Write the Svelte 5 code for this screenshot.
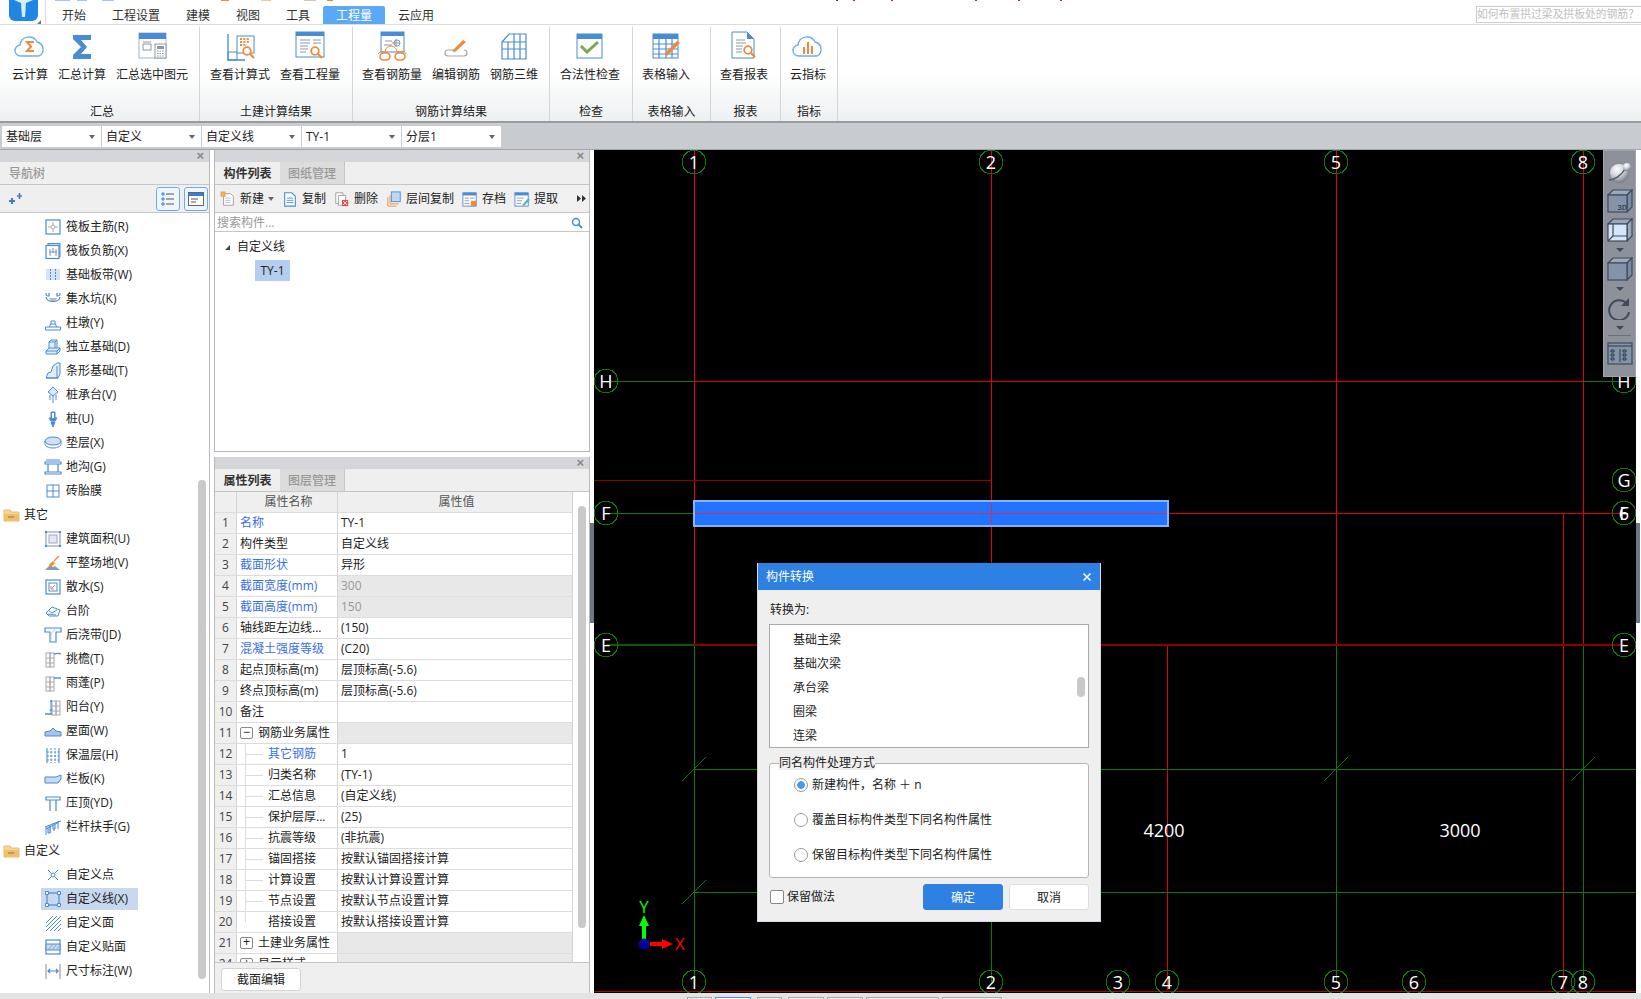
<script>
  const B = '#4a8bd6', O = '#ee8a3a', G = '#a8a8a8';

  const treeIcons = {
    raftMain: `<rect x="2" y="2" width="14" height="14" fill="#fff" stroke="${B}" stroke-width="1.2"/><path d="M9 4v10M4 9h10" stroke="#aaa"/><circle cx="9" cy="9" r="2" fill="#fff" stroke="#aaa"/>`,
    raftNeg: `<rect x="4" y="1.5" width="12" height="13" fill="#cfe0f4" stroke="${B}"/><rect x="2" y="3.5" width="13" height="13" fill="#fff" stroke="${B}" stroke-width="1.2"/><path d="M6 7v7M9 6v5M12 7v7M5 10h8" stroke="#7b93ad"/>`,
    strip: `<rect x="2" y="3" width="14" height="11" fill="#d5e4f5"/><path d="M6.5 3v11M11.5 3v11" stroke="${B}" stroke-dasharray="2 1"/>`,
    pit: `<path d="M2 3c0 3 1 3 3 3V3M16 3c0 3-1 3-3 3V3M2 7c1 6 13 6 14 0" fill="none" stroke="${B}" stroke-width="1.2"/><path d="M5 8h8l-1 3H6z" fill="#bbb"/>`,
    pier: `<path d="M1.5 13h15v3h-15zM5.5 13l1-3h5l1 3M7 10V7h4v3" fill="#fff" stroke="${B}"/>`,
    iso: `<path d="M2 16v-3l3-3h11v3l-3 3zM2 13h11v3M13 13l3-3M5 10V4l2-2h6v8M5 4h6v6M11 4l2-2" fill="#e4eefa" stroke="${B}"/>`,
    stripF: `<path d="M2 16l2-5 3-1 2-6 4-3h3v11l-2 4z" fill="#e4eefa" stroke="${B}"/><path d="M2 16h12M13 4v12" fill="none" stroke="${B}"/>`,
    cap: `<path d="M9 1l5 5-5 4-5-4zM9 10v7M6 9v5M12 9v5" fill="#dce9f8" stroke="${B}"/>`,
    pile: `<path d="M7 2h4v8H7zM5 8h8l-2 3H7zM7 12h4l-2 5z" fill="${B}" stroke="${B}"/><rect x="8" y="3" width="2" height="5" fill="#fff"/>`,
    cushion: `<ellipse cx="9" cy="7" rx="8" ry="4" fill="#cfe0f4" stroke="${B}"/><path d="M1 7v3c0 2 3 4 8 4s8-2 8-4V7" fill="none" stroke="${B}"/>`,
    ditch: `<path d="M2 2h14M1 4h16v2H1zM4 6v8M14 6v8M1 14h16v2H1z" fill="none" stroke="${B}" stroke-width="1.2"/>`,
    brick: `<rect x="3" y="3" width="12" height="12" fill="none" stroke="${B}"/><path d="M9 3v12M3 9h12" stroke="${B}"/>`,
    area: `<rect x="2" y="2" width="14" height="14" fill="none" stroke="#8ea4bd" stroke-width="1.2"/><rect x="5" y="5" width="8" height="8" fill="#e4e8ee" stroke="#9aa9bb"/><path d="M1 1h2v2H1zM15 1h2v2h-2zM1 15h2v2H1zM15 15h2v2h-2z" fill="${B}"/>`,
    level: `<path d="M1 16l5-5 3 2 2-1 5 4z" fill="#8f99a6"/><path d="M6 12l4-4" stroke="${O}" stroke-width="3"/><path d="M10 7l5-5" stroke="${O}" stroke-width="1.4"/>`,
    apron: `<rect x="2" y="2" width="14" height="14" fill="none" stroke="${B}" stroke-width="1.2"/><rect x="5" y="5" width="8" height="8" fill="#fff" stroke="${B}"/><path d="M11 7l-4 4M7 8v3h3" fill="none" stroke="${O}"/>`,
    step: `<path d="M2 11l6-6 8 3-2 6H5z" fill="#fff" stroke="${B}"/><path d="M5 9l3 2 5-3M4 12l8 1" fill="none" stroke="${B}"/>`,
    pour: `<path d="M1 2h16v4h-5v10H6V6H1z" fill="#fff" stroke="${B}" stroke-width="1.2"/><path d="M7 14V8l4-5" fill="none" stroke="#aacbf0"/>`,
    eave: `<rect x="2" y="3" width="4" height="14" fill="none" stroke="${G}"/><rect x="6" y="3" width="4" height="14" fill="none" stroke="${G}"/><path d="M2 8h8M2 13h8" stroke="${G}"/><path d="M10 4c3-1 5-1 7 0" fill="none" stroke="${B}" stroke-width="1.2"/>`,
    canopy: `<rect x="2" y="3" width="4" height="14" fill="none" stroke="${G}"/><rect x="6" y="3" width="4" height="14" fill="none" stroke="${G}"/><path d="M2 8h8M2 13h8" stroke="${G}"/><path d="M10 4h7" stroke="${B}" stroke-width="1.4"/>`,
    balcony: `<rect x="12" y="3" width="4" height="14" fill="none" stroke="${G}"/><rect x="8" y="3" width="4" height="14" fill="none" stroke="${G}"/><path d="M8 8h8M8 13h8" stroke="${G}"/><path d="M6 3h2M1 16h7M6 12h2" stroke="${B}" stroke-width="1.5"/><path d="M7 3v13" stroke="${B}"/>`,
    roof: `<path d="M1 10l5-1 3-3 3 3 5 1v4H1z" fill="#a7c5ea" stroke="${B}"/>`,
    insul: `<path d="M3 2v15M15 2v15" stroke="${B}" stroke-width="1.1"/><path d="M7 2v15M11 2v15M3 6h12M3 10h12M3 14h12" stroke="${B}" stroke-dasharray="2 1.5"/>`,
    parapet: `<path d="M1 7h11l5-2v4l-3 4H1z" fill="#c5daf3" stroke="${B}"/>`,
    coping: `<path d="M2 3h14v3H2zM6 6v11M12 6v11" fill="none" stroke="${B}" stroke-width="1.2"/>`,
    rail: `<path d="M2 17V9M6 15V7M10 13V5M14 11V3M2 11l13-7M1 9l5-2 5-2 6-2" fill="none" stroke="${B}"/><path d="M4 9h2v6H4zM9 6h2v5H9z" fill="#cfe0f4" stroke="${B}"/>`,
    point: `<path d="M4 4l10 10M14 4L4 14" stroke="${B}"/><circle cx="9" cy="9" r="2" fill="#fff" stroke="${B}"/>`,
    line: `<rect x="3" y="3" width="12" height="12" fill="none" stroke="${B}" stroke-width="1.2"/><path d="M1.5 1.5h3v3h-3zM13.5 1.5h3v3h-3zM1.5 13.5h3v3h-3zM13.5 13.5h3v3h-3z" fill="#fff" stroke="${B}"/>`,
    face: `<path d="M2 9l7-7M2 13l11-11M2 17L17 2M6 17L17 6M10 17l7-7M14 17l3-3" stroke="${B}"/>`,
    patch: `<rect x="2" y="2" width="14" height="14" fill="#fff" stroke="${B}" stroke-width="1.2"/><path d="M2 6h14v6H2z" fill="#c5daf3" stroke="${B}"/><path d="M4 12l5-6M8 12l5-6M12 12l4-5" stroke="#8fa8c7"/>`,
    dim: `<path d="M2 2v15M16 2v15" stroke="#8b8b8b"/><path d="M4 9h10M6 7l-2 2 2 2M12 7l2 2-2 2" fill="none" stroke="${B}" stroke-width="1.2"/>`,
  };

  const tree = [
    ['raftMain', '筏板主筋(R)'], ['raftNeg', '筏板负筋(X)'], ['strip', '基础板带(W)'], ['pit', '集水坑(K)'],
    ['pier', '柱墩(Y)'], ['iso', '独立基础(D)'], ['stripF', '条形基础(T)'], ['cap', '桩承台(V)'],
    ['pile', '桩(U)'], ['cushion', '垫层(X)'], ['ditch', '地沟(G)'], ['brick', '砖胎膜'],
    ['folder', '其它'],
    ['area', '建筑面积(U)'], ['level', '平整场地(V)'], ['apron', '散水(S)'], ['step', '台阶'],
    ['pour', '后浇带(JD)'], ['eave', '挑檐(T)'], ['canopy', '雨蓬(P)'], ['balcony', '阳台(Y)'],
    ['roof', '屋面(W)'], ['insul', '保温层(H)'], ['parapet', '栏板(K)'], ['coping', '压顶(YD)'],
    ['rail', '栏杆扶手(G)'],
    ['folder', '自定义'],
    ['point', '自定义点'], ['line', '自定义线(X)'], ['face', '自定义面'], ['patch', '自定义贴面'], ['dim', '尺寸标注(W)'],
  ];

  const head = (x, y, w, h) => `<rect x="${x}" y="${y}" width="${w}" height="${h}" fill="#fff" stroke="${B}"/><rect x="${x}" y="${y}" width="${w}" height="4" fill="${B}"/>`;
  const glass = (x, y) => `<circle cx="${x}" cy="${y}" r="3.8" fill="#fff" stroke="${O}" stroke-width="1.8"/><path d="M${x + 3} ${y + 3}l4 4" stroke="${O}" stroke-width="2.2"/>`;

  const ribbonIcons = {
    cloudSum: `<path d="M7 26a5.5 5.5 0 0 1-1-11 9 9 0 0 1 17-3 7.5 7.5 0 0 1 2 14z" fill="#fff" stroke="#69b0f2" stroke-width="1.4"/><path d="M20 12h-7l4 4.5-4 4.500h7" fill="none" stroke="${O}" stroke-width="2"/>`,
    sigma: `<path d="M7 5h18v5H15l6 7-6 7h10v5H7v-4l8-8-8-8z" fill="${B}"/>`,
    calc: `<rect x="3" y="3" width="27" height="25" fill="#fff" stroke="#9fb4cc"/><rect x="3" y="3" width="27" height="6" fill="${B}"/><rect x="7" y="14" width="8" height="6" fill="none" stroke="#8a97a6"/><path d="M7 12h8" stroke="#8a97a6"/><rect x="19" y="14" width="11" height="14" fill="#fff" stroke="#8a97a6"/><rect x="21" y="16" width="7" height="3" fill="#8a97a6"/><path d="M21 21h7M21 23.500h7M21 26h7" stroke="#8a97a6" stroke-dasharray="1.500 1"/>`,
    formula: `<path d="M4 4v26h17" fill="none" stroke="${B}" stroke-width="1.300"/><rect x="4" y="22" width="9" height="8" fill="none" stroke="${B}"/><rect x="13" y="6" width="17" height="17" fill="#fff" stroke="${B}"/><path d="M16 9h10M16 12h10M16 15h7" stroke="${O}" stroke-width="2" stroke-dasharray="2 1.400"/>${glass(23, 21)}`,
    qty: `${head(2, 2, 28, 25)}<path d="M6 10h10M6 13h10M6 16h8M6 19h8M6 22h6M19 10h8M19 13h8" stroke="#8a97a6"/>${glass(21, 21)}`,
    glasses: `${head(5, 2, 23, 20)}<path d="M9 11h7M8 15h8M20 9v8M16 13h8" stroke="#8a97a6"/><circle cx="21" cy="13" r="3" fill="none" stroke="#8a97a6"/><path d="M2 24a4 4 0 0 1 5-2h2a5 5 0 0 1 12 0h3a4 4 0 0 1 6 2" fill="none" stroke="${O}"/><rect x="4" y="23" width="10" height="7" rx="3.500" fill="#fff" stroke="${O}" stroke-width="1.600"/><rect x="19" y="23" width="10" height="7" rx="3.500" fill="#fff" stroke="${O}" stroke-width="1.600"/>`,
    edit: `<path d="M15 20H8a3 3 0 0 0 0 6h16a3 3 0 0 0 0-6" fill="none" stroke="#a7a7a7" stroke-width="1.200"/><path d="M12 21l11-11 3 2-11 10z" fill="${O}"/>`,
    rebar: `<path d="M4 12l7-8h17v25H4zM4 12h24M4 19h24M10 12v17M16 4v25M22 4v25M4 12v17" fill="none" stroke="${B}" stroke-width="1.200"/>`,
    check: `<rect x="3" y="4" width="25" height="24" fill="#fff" stroke="${B}"/><rect x="3" y="4" width="25" height="5" fill="${B}"/><path d="M7 16l6 6L24 12" fill="none" stroke="#78a853" stroke-width="3"/>`,
    table: `<rect x="3" y="4" width="25" height="24" fill="#fff" stroke="${B}"/><rect x="3" y="4" width="25" height="5" fill="${B}"/><path d="M3 14h25M3 19h25M3 24h25M9 9v19M16 9v19M22 9v19" stroke="${B}" stroke-width="1.200"/><path d="M17 26l13-13-3-2-12 12z" fill="${O}"/>`,
    report: `<path d="M4 2h15l7 7v19H4z" fill="#fff" stroke="${B}"/><path d="M19 2l7 7h-7z" fill="${B}"/><path d="M8 10h9M8 13h10M8 16h7M8 19h6M8 22h6" stroke="#8a97a6"/>${glass(20, 20)}`,
    cloudBar: `<path d="M7 26a5.500 5.500 0 0 1-1-11 9 9 0 0 1 17-3 7.500 7.500 0 0 1 2 14z" fill="#fff" stroke="#69b0f2" stroke-width="1.400"/><path d="M12 24V17M16 24V12M20 24V16" stroke="${O}" stroke-width="2"/>`,
  };

  const groups = [
    { name: '汇总', w: 200, pad: 4, items: [['cloudSum', '云计算', 52], ['sigma', '汇总计算', 52], ['calc', '汇总选中图元', 88]] },
    { name: '土建计算结果', w: 153, pad: 5, items: [['formula', '查看计算式', 70], ['qty', '查看工程量', 70]] },
    { name: '钢筋计算结果', w: 197, pad: 9, items: [['glasses', '查看钢筋量', 60], ['edit', '编辑钢筋', 68], ['rebar', '钢筋三维', 48]] },
    { name: '检查', w: 83, pad: 0, items: [['check', '合法性检查', 80]] },
    { name: '表格输入', w: 78, pad: 0, items: [['table', '表格输入', 66]] },
    { name: '报表', w: 70, pad: 0, items: [['report', '查看报表', 66]] },
    { name: '指标', w: 57, pad: 0, items: [['cloudBar', '云指标', 54]] },
  ];

  const tools = [
    ['新建', `<path d="M4 3h8l3 3v10H4z" fill="#fff" stroke="#999"/><path d="M6 8h6M6 10.500h6M6 13h6" stroke="#bbb"/><rect x="1" y="1" width="5" height="5" fill="#f4b25a"/><path d="M1 1h5v5H1z" fill="none" stroke="#e58a1f" stroke-dasharray="1 1"/>`],
    ['复制', `<path d="M3 2h8l4 4v11H3z" fill="#fff" stroke="${B}" stroke-width="1.200"/><path d="M5.500 8h7M5.500 10.500h7M5.500 13h7" stroke="${B}"/>`],
    ['删除', `<path d="M2 2h8v12H2z" fill="#fff" stroke="#999"/><path d="M5 5h8v11H5z" fill="#fff" stroke="#999"/><rect x="9" y="10" width="7" height="7" fill="#d9534f"/><path d="M10.500 11.500l4 4M14.500 11.500l-4 4" stroke="#fff"/>`],
    ['层间复制', `<path d="M2 7v10h10M4.500 5v9.500h10" fill="none" stroke="${O}"/><rect x="6" y="1" width="10" height="11" fill="#bcd8f7" stroke="${B}"/>`],
    ['存档', `<rect x="1" y="2" width="15" height="15" fill="#fff" stroke="${B}"/><rect x="1" y="2" width="15" height="3" fill="${B}"/><path d="M3 8h5M3 11h5M3 14h5M9 8h5" stroke="#8a97a6"/><rect x="10" y="11" width="6" height="6" fill="${O}"/>`],
    ['提取', `<rect x="1" y="2" width="15" height="15" fill="#fff" stroke="${B}"/><rect x="1" y="2" width="15" height="3" fill="${B}"/><path d="M3 8h8M3 11h6M3 14h5" stroke="#8a97a6"/><path d="M9 16l7-8 2 2-7 7z" fill="#5ab0c8"/>`],
  ];

  const rows = [
    { n: 1, name: '名称', val: 'TY-1', blue: true },
    { n: 2, name: '构件类型', val: '自定义线' },
    { n: 3, name: '截面形状', val: '异形', blue: true },
    { n: 4, name: '截面宽度(mm)', val: '300', blue: true, off: true },
    { n: 5, name: '截面高度(mm)', val: '150', blue: true, off: true },
    { n: 6, name: '轴线距左边线...', val: '(150)' },
    { n: 7, name: '混凝土强度等级', val: '(C20)', blue: true },
    { n: 8, name: '起点顶标高(m)', val: '层顶标高(-5.6)' },
    { n: 9, name: '终点顶标高(m)', val: '层顶标高(-5.6)' },
    { n: 10, name: '备注', val: '' },
    { n: 11, name: '钢筋业务属性', val: '', group: '−' },
    { n: 12, name: '其它钢筋', val: '1', blue: true, sub: true },
    { n: 13, name: '归类名称', val: '(TY-1)', sub: true },
    { n: 14, name: '汇总信息', val: '(自定义线)', sub: true },
    { n: 15, name: '保护层厚...', val: '(25)', sub: true },
    { n: 16, name: '抗震等级', val: '(非抗震)', sub: true },
    { n: 17, name: '锚固搭接', val: '按默认锚固搭接计算', sub: true },
    { n: 18, name: '计算设置', val: '按默认计算设置计算', sub: true },
    { n: 19, name: '节点设置', val: '按默认节点设置计算', sub: true },
    { n: 20, name: '搭接设置', val: '按默认搭接设置计算', sub: true, last: true },
    { n: 21, name: '土建业务属性', val: '', group: '+' },
    { n: 24, name: '显示样式', val: '', group: '+' },
  ];

  // grid lines, page coordinates
  const RED = '#e00000', GREEN = '#0b7a0b', DRED = '#8a0000';
  const lines = [
    [694, 150, 694, 645, '#f00000'], [694, 645, 694, 982, GREEN],
    [991, 150, 991, 645, RED], [991, 645, 991, 982, GREEN],
    [1336, 150, 1336, 645, RED], [1336, 645, 1336, 982, GREEN],
    [1583, 150, 1583, 645, RED], [1583, 645, 1583, 982, GREEN],
    [1167, 645, 1167, 990, RED], [1563, 513, 1563, 990, RED],
    [606, 381, 694, 381, GREEN], [694, 381, 1583, 381, RED], [1583, 381, 1624, 381, GREEN],
    [593, 480, 991, 480, DRED],
    [606, 513, 694, 513, GREEN], [694, 513, 1624, 513, RED],
    [694, 769, 1636, 769, GREEN], [694, 892, 1636, 892, GREEN],
    [593, 991, 1636, 991, '#b00000'],
    [682, 781, 706, 757, GREEN], [1324, 781, 1348, 757, GREEN], [1571, 781, 1595, 757, GREEN],
    [682, 904, 706, 880, GREEN],
  ];

  const bubbles = [
    [694, 162, '1'], [991, 162, '2'], [1336, 162, '5'], [1583, 162, '8'],
    [606, 381, 'H'], [606, 513, 'F'], [606, 645, 'E'],
    [1624, 381, 'H'], [1624, 480, 'G'], [1624, 513, 'F'], [1624, 513, '6'], [1624, 645, 'E'],
    [694, 982, '1'], [991, 982, '2'], [1118, 982, '3'], [1167, 982, '4'], [1336, 982, '5'], [1414, 982, '6'], [1563, 982, '7'], [1583, 982, '8'],
  ];

  const ring = (cx, cy) => Array.from({ length: 12 }, (_, i) => {
    const a = (i / 12) * Math.PI * 2;
    return `${(cx + 12 * Math.cos(a)).toFixed(1)},${(cy + 12 * Math.sin(a)).toFixed(1)}`;
  }).join(' ');

  const specks = [[55, 15, '#a9c6e8'], [77, 10, '#a9c6e8'], [102, 12, '#a9c6e8'], [221, 8, '#ee8a3a'], [261, 10, '#e8c9a8'], [304, 12, '#c9c9c9'], [327, 6, '#ee8a3a'], [836, 2, '#444'], [853, 2, '#a33'], [891, 2, '#a33'], [975, 2, '#a33'], [1018, 2, '#a33'], [1060, 2, '#a33']];

  const convertTo = ['基础主梁', '基础次梁', '承台梁', '圈梁', '连梁'];
  const sameName = ['新建构件，名称 ＋ n', '覆盖目标构件类型下同名构件属性', '保留目标构件类型下同名构件属性'];
</script>

<div class="app">
  <header class="titlebar">
    {#each specks as [x, w, c]}
      <i class="speck" style="left:{x}px;width:{w}px;background:{c}"></i>
    {/each}
    <div class="logo">
      <svg width="29" height="21" viewBox="0 0 29 21"><path d="M0 0h29v15a6 6 0 0 1-6 6H6a6 6 0 0 1-6-6z" fill="#1f86e6"/><path d="M5 0h19l-7 3-1 14h-3L12 3z" fill="#d8eefc"/></svg>
      <i class="logo__corner"></i>
    </div>
    <nav class="menu">
      {#each ['开始', '工程设置', '建模', '视图', '工具', '工程量', '云应用'] as m}
        <span class="menu__item" class:menu__item--on={m === '工程量'}>{m}</span>
      {/each}
    </nav>
    <div class="ask">如何布置拱过梁及拱板处的钢筋？</div>
  </header>

  <section class="ribbon">
    {#each groups as g}
      <div class="group" style="width:{g.w}px">
        <div class="group__btns" style="padding-left:{g.pad}px">
          {#each g.items as it}
            <div class="rbtn" style="width:{it[2]}px">
              <svg width="32" height="32" viewBox="0 0 32 32">{@html ribbonIcons[it[0]]}</svg>
              <span>{it[1]}</span>
            </div>
          {/each}
        </div>
        <div class="group__name">{g.name}</div>
      </div>
    {/each}
  </section>

  <div class="combos">
    {#each ['基础层', '自定义', '自定义线', 'TY-1', '分层1'] as c}
      <div class="combo"><span>{c}</span><i class="caret"></i></div>
    {/each}
  </div>

  <main class="main">
    <aside class="nav">
      <div class="closebar"><span>×</span></div>
      <div class="nav__title">导航树</div>
      <div class="nav__tools">
        <svg class="pins" width="14" height="12" viewBox="0 0 14 12"><path d="M1 8h6M4 5v6" stroke="#3b7fd0" stroke-width="2"/><path d="M9 3h5M11.500 0v6" stroke="#3b7fd0" stroke-width="1.600"/></svg>
        <span class="spacer"></span>
        <button class="navbtn" aria-label="list"><svg width="14" height="14" viewBox="0 0 14 14"><path d="M1 1h2v2H1zM1 6h2v2H1zM1 11h2v2H1z" fill="none" stroke="#2e81e3"/><path d="M5 2h8M5 7h8M5 12h8" stroke="#555"/></svg></button>
        <button class="navbtn" aria-label="detail"><svg width="16" height="14" viewBox="0 0 16 14"><rect x=".5" y=".5" width="15" height="13" fill="#fff" stroke="#666"/><rect x="1" y="1" width="14" height="3" fill="#2e81e3"/><path d="M3 7h7M3 10h5" stroke="#555"/></svg></button>
      </div>
      <div class="nav__body">
        <ul class="tree">
          {#each tree as [icon, label]}
            {#if icon === 'folder'}
              <li class="tree__row tree__row--folder">
                <svg width="17" height="14" viewBox="0 0 17 14"><path d="M1 2h6l1 2h8v9H1z" fill="#f6d79b" stroke="#e5bb6c"/><path d="M1 6h15v7H1z" fill="#efc06a"/><path d="M5 9h6" stroke="#b98a33" stroke-width="1.400"/></svg>
                <span>{label}</span>
              </li>
            {:else}
              <li class="tree__row" class:tree__row--on={label === '自定义线(X)'}>
                <svg width="18" height="18" viewBox="0 0 18 18">{@html treeIcons[icon]}</svg>
                <span>{label}</span>
              </li>
            {/if}
          {/each}
        </ul>
        <div class="vbar"></div>
      </div>
    </aside>

    <div class="mid">
      <section class="list">
        <div class="closebar"><span>×</span></div>
        <div class="tabs"><span class="tab tab--on">构件列表</span><span class="tab">图纸管理</span></div>
        <div class="tools">
          {#each tools as [label, icon], i}
            <span class="tool">
              <svg width="16" height="16" viewBox="0 0 18 18">{@html icon}</svg>{label}
              {#if i === 0}<i class="caret caret--tool"></i>{/if}
            </span>
          {/each}
          <svg class="tools__more" width="9" height="7" viewBox="0 0 9 7"><path d="M0 0l4 3.500L0 7zM5 0l4 3.500L5 7z" fill="#333"/></svg>
        </div>
        <div class="search">
          <span>搜索构件...</span>
          <svg width="12" height="12" viewBox="0 0 12 12"><circle cx="5" cy="5" r="3.500" fill="none" stroke="#3d93c9" stroke-width="1.500"/><path d="M7.500 7.500l3.500 3.500" stroke="#3d93c9" stroke-width="1.800"/></svg>
        </div>
        <div class="list__body">
          <div class="node"><i class="node__arrow"></i>自定义线</div>
          <div class="leaf">TY-1</div>
        </div>
      </section>

      <section class="props">
        <div class="closebar"><span>×</span></div>
        <div class="tabs"><span class="tab tab--on">属性列表</span><span class="tab">图层管理</span></div>
        <div class="props__wrap">
          <div class="grid">
            <div class="grid__row grid__row--head"><div class="c-n"></div><div class="c-name">属性名称</div><div class="c-val">属性值</div></div>
            {#each rows as r}
              <div class="grid__row">
                <div class="c-n">{r.n}</div>
                <div class="c-name" class:blue={r.blue} class:sub={r.sub} class:lastsub={r.last}>
                  {#if r.group}<i class="expander">{r.group}</i>{/if}{r.name}
                </div>
                <div class="c-val" class:off={r.off} class:band={r.group}>{r.val}</div>
              </div>
            {/each}
          </div>
          <div class="props__scroll"><i></i></div>
        </div>
        <div class="props__foot"><button class="editbtn">截面编辑</button></div>
      </section>
    </div>

    <i class="handle handle--left"></i>

    <section class="canvas">
      <svg class="cad" width="1042" height="843" viewBox="594 150 1042 843">
        {#each lines as [x1, y1, x2, y2, c]}
          <line class="crisp" {x1} {y1} {x2} {y2} stroke={c} stroke-width="1"/>
        {/each}
        <line class="crisp" x1="606" y1="645" x2="694" y2="645" stroke="#0a5a0a" stroke-width="2"/>
        <line class="crisp" x1="694" y1="645" x2="1624" y2="645" stroke={DRED} stroke-width="2"/>
        <rect x="694" y="501" width="474" height="25" fill="#2273ff" stroke="#86b2ff" stroke-width="2"/>
        <line class="crisp" x1="695" y1="513" x2="1167" y2="513" stroke="#d8304a"/>
        <line class="crisp" x1="991" y1="502" x2="991" y2="525" stroke="#d8304a"/>
        {#each bubbles as [x, y, t]}
          <polygon class="crisp" points={ring(x, y)} fill="none" stroke="#0b7a0b"/>
          <text x={x} y={y + 6.500} class="axis">{t}</text>
        {/each}
        <text x="1164" y="837" class="dim">4200</text>
        <text x="1460" y="837" class="dim">3000</text>
        <line x1="644" y1="944" x2="644" y2="925" stroke="#00ff00" stroke-width="4"/>
        <path d="M639 926l5-11 5 11z" fill="#00ff00"/>
        <text x="644" y="913" class="ucs ucs--y">Y</text>
        <line x1="650" y1="944" x2="663" y2="944" stroke="#ff0000" stroke-width="4"/>
        <path d="M662 939l11 5-11 5z" fill="#ff0000"/>
        <circle cx="644" cy="944" r="5.500" fill="#00009c"/>
        <text x="680" y="950" class="ucs ucs--x">X</text>
      </svg>

      <div class="viewbar">
        <svg width="26" height="24" viewBox="0 0 26 24"><defs><radialGradient id="sph" cx=".4" cy=".3" r=".7"><stop offset="0" stop-color="#fff"/><stop offset=".5" stop-color="#d3d7dd"/><stop offset="1" stop-color="#7d838e"/></radialGradient></defs><circle cx="12" cy="13" r="9.500" fill="url(#sph)" stroke="#747a85" stroke-width=".6"/><path d="M2 20c5 0 12-4 16-11" fill="none" stroke="#4d5561" stroke-width="1.400"/><circle cx="20" cy="7" r="4" fill="url(#sph)"/></svg>
        <svg width="26" height="24" viewBox="0 0 26 24"><g stroke="#3f4b5c" stroke-width="1.200"><path d="M1 6l5-5h19l-5 5z" fill="#9aa8ba"/><path d="M20 6l5-5v17l-5 5z" fill="#7a8aa0"/><rect x="1" y="6" width="19" height="17" fill="#8394aa"/></g><text x="15" y="21" class="tag3d">3D</text></svg>
        <svg width="26" height="24" viewBox="0 0 26 24"><g stroke="#3f4b5c" stroke-width="1.200"><path d="M1 6l5-5h19l-5 5z" fill="#9aa8ba"/><path d="M20 6l5-5v17l-5 5z" fill="#9aa8ba"/><rect x="1" y="6" width="19" height="17" fill="#d4e6fb"/><path d="M6 6v12h14M6 18l-5 5" fill="none"/></g></svg>
        <i class="vdrop"></i>
        <svg width="26" height="24" viewBox="0 0 26 24"><g stroke="#3f4b5c" stroke-width="1.200"><path d="M1 6l5-5h19l-5 5z" fill="#9aa8ba"/><path d="M20 6l5-5v17l-5 5z" fill="#7a8aa0"/><rect x="1" y="6" width="19" height="17" fill="#8394aa"/></g></svg>
        <i class="vdrop"></i>
        <svg width="26" height="24" viewBox="0 0 26 24"><path d="M20 8a10 10 0 1 0 2 8" fill="none" stroke="#3f4b5c" stroke-width="2"/><path d="M22 2v8h-8z" fill="#3f4b5c"/></svg>
        <i class="vdrop"></i>
        <i class="vsep"></i>
        <svg width="26" height="24" viewBox="0 0 26 24"><rect x="1" y="2" width="24" height="21" fill="#8394aa" stroke="#3f4b5c" stroke-width="1.200"/><path d="M1 5h24M13 8v13M4 9h3v2H4zM4 13h3v2H4zM4 17h3v2H4zM16 9h3v2h-3zM16 13h3v2h-3zM16 17h3v2h-3z" fill="none" stroke="#2e3948"/></svg>
      </div>
    </section>

    <i class="handle handle--right"></i>
  </main>

  <footer class="status">
    {#each [[687, 25], [715, 36], [757, 25], [788, 36], [827, 36], [866, 73], [942, 60]] as [x, w], i}
      <i class="status__tab" class:status__tab--on={i === 1} style="left:{x}px;width:{w}px"></i>
    {/each}
  </footer>

  <div class="dialog">
    <div class="dialog__head"><span>构件转换</span><svg width="10" height="10" viewBox="0 0 10 10"><path d="M1.500 1.500l7 7M8.500 1.500l-7 7" stroke="#fff" stroke-width="1.500"/></svg></div>
    <div class="dialog__body">
      <div class="dialog__label">转换为:</div>
      <div class="picklist">
        {#each convertTo as item}<div class="picklist__item">{item}</div>{/each}
        <i class="picklist__thumb"></i>
      </div>
      <fieldset class="fs">
        <legend>同名构件处理方式</legend>
        {#each sameName as opt, i}
          <div class="radio"><i class="radio__dot" class:radio__dot--on={i === 0}></i>{opt}</div>
        {/each}
      </fieldset>
      <div class="dialog__foot">
        <i class="checkbox"></i><span>保留做法</span>
        <span class="spacer"></span>
        <button class="btn btn--ok">确定</button>
        <button class="btn">取消</button>
      </div>
    </div>
  </div>
</div>

<style>
  :global(body) {
    margin: 0;
    background: #fff;
  }

  * {
    box-sizing: border-box;
  }

  i {
    font-style: normal;
    display: block;
  }

  .app {
    position: relative;
    width: 1641px;
    height: 999px;
    overflow: hidden;
    display: flex;
    flex-direction: column;
    font: 12px/16px "Open Sans", "Noto Sans CJK SC", sans-serif;
    color: #222;
  }

  .spacer {
    flex: 1;
  }

  /* title bar */
  .titlebar {
    height: 25px;
    flex: none;
    display: flex;
    background: #fff;
    border-bottom: 1px solid #dcdcdc;
    position: relative;
  }

  .speck {
    position: absolute;
    top: 0;
    height: 1px;
  }

  .logo {
    width: 46px;
    padding-left: 9px;
    border-right: 1px solid #dcdcdc;
    position: relative;
  }

  .logo svg {
    display: block;
  }

  .logo__corner {
    position: absolute;
    left: 37px;
    top: 20px;
    border-left: 4px solid transparent;
    border-bottom: 4px solid #777;
  }

  .menu {
    display: flex;
    padding: 6px 0 0 3px;
    height: 24px;
    align-items: stretch;
  }

  .menu__item {
    padding: 2px 13px 0;
    line-height: 16px;
    color: #333;
  }

  .menu__item--on {
    background: #5ba8f5;
    color: #fff;
    border-radius: 2px 2px 0 0;
    padding: 2px 13px 0;
    width: 62px;
    text-align: center;
  }

  .ask {
    position: absolute;
    left: 1476px;
    top: 6px;
    width: 170px;
    height: 17px;
    border: 1px solid #ccc;
    color: #c0c0c0;
    white-space: nowrap;
    overflow: hidden;
    font-size: 10.8px;
    line-height: 14px;
  }

  /* ribbon */
  .ribbon {
    height: 98px;
    flex: none;
    display: flex;
    background: linear-gradient(#fff 0, #fff 50%, #edf0f1 100%);
    border-bottom: 2px solid #9b9b9b;
    padding-top: 2px;
  }

  .group {
    display: flex;
    flex-direction: column;
    align-items: center;
    border-right: 1px solid #d3d6d8;
    height: 94px;
  }

  .group__btns {
    display: flex;
    width: 100%;
    padding-top: 3px;
    flex: 1;
  }

  .rbtn {
    display: flex;
    flex-direction: column;
    align-items: center;
    white-space: nowrap;
    gap: 5px;
  }

  .group__name {
    height: 17px;
    line-height: 16px;
  }

  .group:first-child .group__name {
    padding-left: 5px;
  }

  /* combos */
  .combos {
    height: 27px;
    flex: none;
    display: flex;
    gap: 1px;
    padding: 3px 0 0 2px;
    background: #c8cbcf;
    border-bottom: 1px solid #a3a5a8;
  }

  .combo {
    width: 99px;
    height: 21px;
    background: #fff;
    display: flex;
    align-items: center;
    justify-content: space-between;
    padding: 0 6px 0 4px;
  }

  .caret {
    border-left: 3px solid transparent;
    border-right: 3px solid transparent;
    border-top: 4px solid #666;
  }

  /* main */
  .main {
    flex: 1;
    min-height: 0;
    display: flex;
    background: #fff;
    position: relative;
  }

  .handle {
    position: absolute;
    top: 373px;
    width: 4px;
    height: 100px;
    background: #6b7785;
  }

  .handle--left {
    left: 590px;
  }

  .handle--right {
    left: 1636px;
  }

  .nav {
    width: 210px;
    flex: none;
    display: flex;
    flex-direction: column;
    border-right: 1px solid #b9b9b9;
    margin-right: 4px;
  }

  .closebar {
    height: 12px;
    flex: none;
    background: #d5d6da;
    color: #888;
    text-align: right;
    padding-right: 5px;
    font: bold 13px/11px "Liberation Sans", sans-serif;
  }

  .nav__title {
    height: 23px;
    flex: none;
    background: #efefef;
    border-bottom: 1px solid #c6c6c6;
    color: #999;
    padding: 4px 9px 0;
    font-weight: 500;
  }

  .nav__tools {
    height: 28px;
    flex: none;
    background: #efefef;
    border-bottom: 1px solid #c6c6c6;
    display: flex;
    align-items: center;
    gap: 4px;
    padding: 0 1px 0 8px;
  }

  .navbtn {
    width: 24px;
    height: 24px;
    padding: 0;
    display: flex;
    align-items: center;
    justify-content: center;
    background: #eef5fd;
    border: 1px solid #6aaef2;
    border-radius: 3px;
  }

  .nav__body {
    flex: 1;
    min-height: 0;
    position: relative;
    background: #fff;
  }

  .tree {
    list-style: none;
    margin: 0;
    padding: 2px 0 0;
  }

  .tree__row {
    height: 24px;
    display: flex;
    align-items: center;
    gap: 4px;
    margin-left: 42px;
    padding-left: 2px;
    width: 97px;
    white-space: nowrap;
  }

  .tree__row--on {
    background: #c7d8ef;
    height: 22px;
    margin: 1px 0 1px 41px;
    padding-left: 3px;
  }

  .tree__row--folder {
    margin-left: 3px;
    padding-left: 0;
    gap: 4px;
  }

  .vbar {
    position: absolute;
    left: 198px;
    top: 267px;
    width: 8px;
    height: 499px;
    border-radius: 4px;
    background: #c9c9c9;
  }

  /* middle column */
  .mid {
    width: 376px;
    flex: none;
    display: flex;
    flex-direction: column;
    gap: 5px;
  }

  .list {
    height: 302px;
    flex: none;
    display: flex;
    flex-direction: column;
    border: solid #b9b9b9;
    border-width: 0 1px 1px;
  }

  .tabs {
    height: 23px;
    flex: none;
    display: flex;
    background: #efefef;
    border-bottom: 1px solid #c6c6c6;
  }

  .tab {
    width: 65px;
    text-align: center;
    line-height: 23px;
    background: #dcdcdc;
    color: #999;
    border-right: 1px solid #c6c6c6;
    font-weight: 500;
  }

  .tab--on {
    background: #efefef;
    color: #333;
    font-weight: 600;
    border-right: 0;
  }

  .tools {
    height: 28px;
    flex: none;
    display: flex;
    align-items: center;
    background: #f0f0f0;
    border-bottom: 1px solid #c6c6c6;
    padding: 1px 0 0 5px;
    gap: 8px;
    position: relative;
  }

  .tool {
    display: flex;
    align-items: center;
    gap: 4px;
    white-space: nowrap;
  }

  .caret--tool {
    margin-left: 0;
  }

  .tools__more {
    position: absolute;
    right: 3px;
    top: 10px;
  }

  .search {
    height: 19px;
    flex: none;
    background: #fff;
    border-bottom: 1px solid #c6c6c6;
    display: flex;
    align-items: center;
    justify-content: space-between;
    padding: 1px 6px 0 2px;
    color: #999;
  }

  .list__body {
    flex: 1;
    background: #fff;
    padding: 6px 0 0 10px;
  }

  .node {
    display: flex;
    align-items: center;
    height: 18px;
    gap: 7px;
  }

  .node__arrow {
    border-left: 5px solid transparent;
    border-bottom: 5px solid #444;
  }

  .leaf {
    margin: 4px 0 0 30px;
    width: 35px;
    height: 21px;
    line-height: 21px;
    text-align: center;
    background: #b3ceee;
  }

  .props {
    flex: 1;
    min-height: 0;
    display: flex;
    flex-direction: column;
    border: solid #b9b9b9;
    border-width: 0 1px;
    background: #efefef;
  }

  .props__wrap {
    height: 471px;
    flex: none;
    display: flex;
    border-bottom: 1px solid #c6c6c6;
    overflow: hidden;
    background: #fff;
  }

  .grid {
    width: 358px;
    flex: none;
  }

  .grid__row {
    display: grid;
    grid-template-columns: 22px 101px 235px;
    height: 21px;
    line-height: 20px;
    border-bottom: 1px solid #dcdcdc;
  }

  .grid__row > div {
    border-right: 1px solid #d4d4d4;
    white-space: nowrap;
    overflow: hidden;
  }

  .c-n {
    background: #efefef;
    text-align: center;
    font-size: 12px;
    color: #444;
  }

  .c-name {
    padding-left: 3px;
    background: #fff;
    position: relative;
    display: flex;
    align-items: center;
  }

  .c-val {
    padding-left: 3px;
    background: #fff;
  }

  .grid__row--head .c-name,
  .grid__row--head .c-val,
  .grid__row--head .c-n {
    background: #efefef;
    text-align: center;
    justify-content: center;
    color: #555;
  }

  .blue {
    color: #3a6fe6;
  }

  .off {
    background: #e8e8e8;
    color: #999;
  }

  .band {
    background: #e8e8e8;
  }

  .sub {
    padding-left: 31px;
  }

  .sub::before {
    content: "";
    position: absolute;
    left: 8px;
    top: 0;
    bottom: 0;
    width: 17px;
    border-left: 1px solid #dcdcdc;
    background: linear-gradient(#dcdcdc, #dcdcdc) left 10px / 100% 1px no-repeat;
  }

  .lastsub::before {
    bottom: 10px;
  }

  .expander {
    width: 13px;
    height: 12px;
    border: 1px solid #888;
    border-radius: 2px;
    font: 12px/9px "Liberation Sans", sans-serif;
    text-align: center;
    margin-right: 5px;
    flex: none;
  }

  .props__scroll {
    flex: 1;
    position: relative;
    background: #fff;
  }

  .props__scroll i {
    position: absolute;
    left: 5px;
    top: 14px;
    width: 8px;
    height: 422px;
    border-radius: 4px;
    background: #c9c9c9;
  }

  .props__foot {
    padding: 5px 6px;
  }

  .editbtn {
    width: 80px;
    height: 23px;
    background: #fff;
    border: 1px solid #d4d4d4;
    border-radius: 3px;
    font: inherit;
    color: #222;
    padding: 0;
  }

  /* drawing area */
  .canvas {
    position: relative;
    width: 1042px;
    margin-left: 4px;
    background: #000;
    flex: none;
    overflow: hidden;
  }

  .cad {
    display: block;
  }

  .crisp {
    shape-rendering: crispEdges;
  }

  .axis {
    font: 18px "Open Sans", sans-serif;
    fill: #fff;
    text-anchor: middle;
  }

  .dim {
    font: 18px "Open Sans", sans-serif;
    fill: #fff;
    text-anchor: middle;
  }

  .ucs {
    font: 17px "Open Sans", sans-serif;
    text-anchor: middle;
  }

  .ucs--y {
    fill: #00ff00;
  }

  .ucs--x {
    fill: #ff0000;
  }

  .viewbar {
    position: absolute;
    right: 0;
    top: 0;
    width: 33px;
    height: 227px;
    background: #8d9199;
    border: 1px solid #a0a4aa;
    display: flex;
    flex-direction: column;
    align-items: center;
    padding-top: 9px;
    gap: 5px;
  }

  .viewbar svg {
    flex: none;
  }

  .tag3d {
    font: 8px "Liberation Mono", monospace;
    fill: #1e2733;
    text-anchor: middle;
  }

  .vdrop {
    border-left: 4px solid transparent;
    border-right: 4px solid transparent;
    border-top: 4px solid #3f4b5c;
    margin-top: 1px;
  }

  .vsep {
    width: 23px;
    height: 1px;
    flex: none;
    background: #6b6f75;
  }

  .status {
    height: 6px;
    flex: none;
    background: #e3e3e3;
    position: relative;
  }

  .status__tab {
    position: absolute;
    top: 4px;
    height: 6px;
    border: 1px solid #aaa;
    background: #eee;
  }

  .status__tab--on {
    border-color: #4a90e2;
    background: #fff;
  }

  /* dialog */
  .dialog {
    position: absolute;
    left: 757px;
    top: 563px;
    width: 344px;
    height: 359px;
    background: #efefef;
    border: 1px solid #d5dbe6;
    border-top: 0;
    display: flex;
    flex-direction: column;
  }

  .dialog__head {
    height: 27px;
    flex: none;
    background: #2e81e3;
    color: #fff;
    display: flex;
    align-items: center;
    justify-content: space-between;
    padding: 0 8px 0 8px;
    font-size: 12px;
  }

  .dialog__body {
    padding: 12px 11px 0;
    flex: 1;
    display: flex;
    flex-direction: column;
  }

  .dialog__label {
    height: 16px;
    margin-bottom: 6px;
    margin-left: 1px;
  }

  .picklist {
    height: 124px;
    background: #fff;
    border: 1px solid #aaa;
    position: relative;
    overflow: hidden;
    padding: 3px 0 0 23px;
    flex: none;
  }

  .picklist__item {
    height: 24px;
    line-height: 24px;
  }

  .picklist__thumb {
    position: absolute;
    right: 3px;
    top: 52px;
    width: 8px;
    height: 20px;
    background: #c9c9c9;
    border-radius: 4px;
  }

  .fs {
    margin: 8px 0 0;
    padding: 0;
    height: 122px;
    flex: none;
    border: 1px solid #b5b5b5;
    border-radius: 3px;
    background: #fff;
    min-width: 0;
  }

  .fs legend {
    padding: 0;
    margin-left: 9px;
    background: #efefef;
    height: 14px;
    line-height: 14px;
  }

  .radio {
    display: flex;
    align-items: center;
    gap: 4px;
    height: 35px;
    margin-left: 23px;
    white-space: nowrap;
  }

  .radio:first-of-type {
    margin-top: -3px;
  }

  .radio__dot {
    width: 14px;
    height: 14px;
    border-radius: 50%;
    border: 1px solid #999;
    background: #fff;
    flex: none;
    margin-left: 1px;
  }

  .radio__dot--on {
    background: radial-gradient(circle, #4a96f5 0 3.5px, #fff 4px);
  }

  .dialog__foot {
    display: flex;
    align-items: center;
    margin-top: 6px;
    height: 26px;
  }

  .checkbox {
    width: 14px;
    height: 14px;
    border: 1px solid #888;
    border-radius: 2px;
    background: #fff;
    margin: 0 3px 0 1px;
  }

  .btn {
    width: 80px;
    height: 26px;
    padding: 1px 0 0;
    background: #fff;
    border: 1px solid #ddd;
    border-radius: 3px;
    font: inherit;
    color: #222;
    margin-left: 6px;
  }

  .btn--ok {
    background: #2e81e3;
    border-color: #2e81e3;
    color: #fff;
  }
</style>
